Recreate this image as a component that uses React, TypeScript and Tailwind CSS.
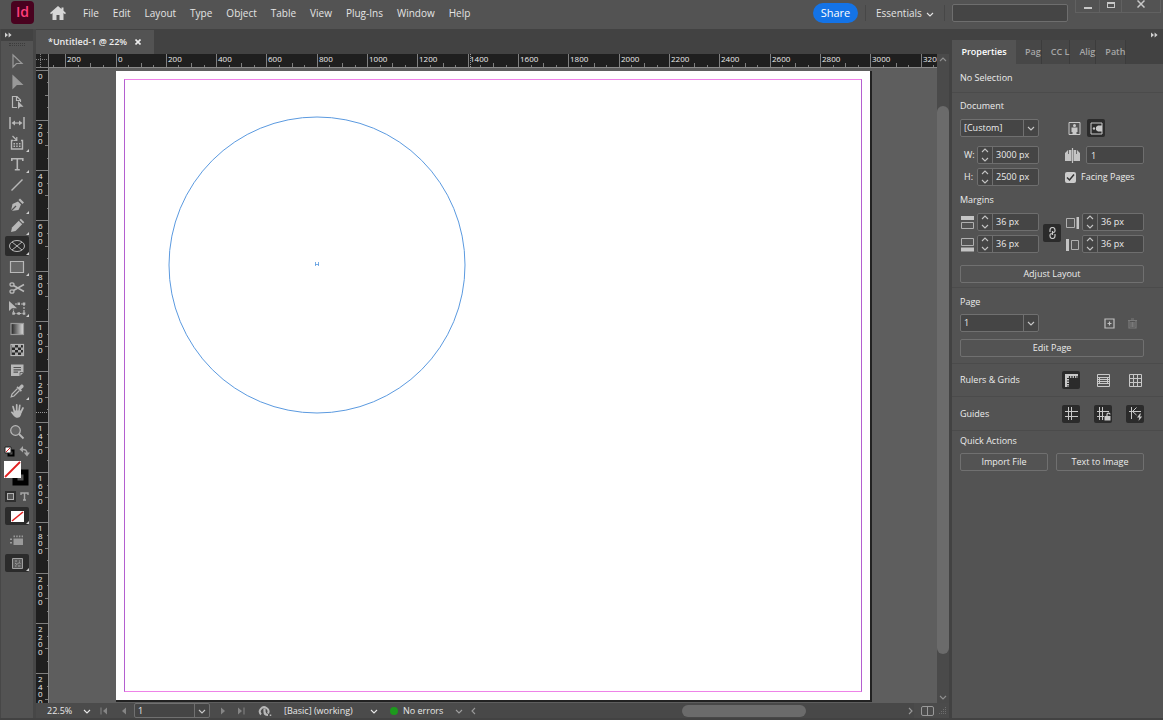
import { useState, type ReactNode } from 'react';
import clsx from 'clsx';

const MENUS = ['File', 'Edit', 'Layout', 'Type', 'Object', 'Table', 'View', 'Plug-Ins', 'Window', 'Help'];

// screen pixels between two labelled ruler ticks (200 document px)
const STEP = 50.33;

/* ---------- icons ---------- */

function Icon({ children, size = 20 }: { children: ReactNode; size?: number }) {
  return (
    <svg width={size} height={size} viewBox={`0 0 ${size} ${size}`} fill="none" stroke="currentColor" strokeWidth="1.2" className="shrink-0" aria-hidden="true">
      {children}
    </svg>
  );
}

function Chevron({ dir = 'down', className }: { dir?: 'down' | 'up' | 'left' | 'right'; className?: string }) {
  const d = {
    down: 'M1 3l3 3 3-3',
    up: 'M1 5l3-3 3 3',
    left: 'M5 1L2 4l3 3',
    right: 'M3 1l3 3-3 3',
  }[dir];
  return (
    <svg width="8" height="8" viewBox="0 0 8 8" fill="none" stroke="currentColor" strokeWidth="1.1" className={clsx('shrink-0', className)} aria-hidden="true">
      <path d={d} />
    </svg>
  );
}

function DoubleArrow() {
  return (
    <svg width="7" height="6" viewBox="0 0 7 6" fill="#d0d0d0" aria-hidden="true">
      <path d="M0 .5L3 3 0 5.5zM3.6.5l3 2.5-3 2.5z" />
    </svg>
  );
}

interface Tool {
  id: string;
  flyout?: boolean;
  icon: ReactNode;
}

const TOOLS: Tool[] = [
  { id: 'Selection', icon: <path d="M6 4v12l3.5-3.5H15z" stroke="#999" /> },
  { id: 'Direct Selection', icon: <path d="M6 4v12l3.5-3.5H15z" fill="#999" stroke="#999" /> },
  {
    id: 'Page',
    icon: (
      <>
        <path d="M10 15.5H5.500v-11H10l3.500 3.500v2M9.500 4.500V8.500h4" />
        <path d="M11 9v8l2.200-2.200H16.500z" fill="currentColor" stroke="none" />
      </>
    ),
  },
  {
    id: 'Gap',
    icon: (
      <>
        <path d="M3 4v12M17 4v12" strokeWidth="1.500" />
        <path d="M6 10h8" />
        <path d="M8 7.500L4.500 10l3.500 2.500zM12 7.500l3.500 2.500-3.500 2.500z" fill="currentColor" stroke="none" />
      </>
    ),
  },
  {
    id: 'Content Collector',
    flyout: true,
    icon: (
      <>
        <path d="M6 7.500H4.500V16h11V7.500H14" strokeWidth="1.400" />
        <path d="M5.500 3l4 4M9.800 4v3.500H6.300" />
        <path d="M6.500 10H8v1.500H6.500zM9.200 10h1.500v1.500H9.200zM12 10h1.500v1.500H12zM6.500 12.500H8V14H6.500zM9.200 12.500h1.500V14H9.200zM12 12.500h1.500V14H12z" fill="currentColor" stroke="none" />
      </>
    ),
  },
  { id: 'Type', flyout: true, icon: <path d="M4.800 7V4.700h11V7M10.300 4.700v11M7.800 15.700h5" strokeWidth="1.600" /> },
  { id: 'Line', icon: <path d="M4.500 15.500l11-11" strokeWidth="1.400" /> },
  {
    id: 'Pen',
    flyout: true,
    icon: (
      <>
        <path d="M4 16l1.500-7 5.500-2.500 3 3-2.500 5.500z" fill="currentColor" stroke="none" />
        <path d="M11.500 5l1.500-1.500 4 4L15.500 9z" fill="currentColor" stroke="none" />
        <path d="M4 16l5-5" stroke="#535353" />
      </>
    ),
  },
  {
    id: 'Pencil',
    flyout: true,
    icon: (
      <>
        <path d="M4 16l1-4.500 6.700-6.700 3.500 3.500L8.500 15z" fill="currentColor" stroke="none" />
        <path d="M12.500 4l1.300-1.300 3.500 3.500L16 7.500z" fill="currentColor" stroke="none" />
      </>
    ),
  },
  {
    id: 'Ellipse Frame',
    flyout: true,
    icon: (
      <>
        <ellipse cx="10" cy="10" rx="7.500" ry="5.500" strokeWidth="1" />
        <path d="M5 6l10 8M15 6L5 14" strokeWidth="1" />
      </>
    ),
  },
  { id: 'Rectangle', flyout: true, icon: <path d="M3.500 4.500h13v11h-13z" fill="#686868" /> },
  {
    id: 'Scissors',
    icon: (
      <>
        <ellipse cx="5" cy="6.500" rx="2" ry="1.700" strokeWidth="1.300" />
        <ellipse cx="5" cy="13.500" rx="2" ry="1.700" strokeWidth="1.300" />
        <path d="M6.500 7.500L17 13.500M6.500 12.500L17 6.500" strokeWidth="1.500" />
      </>
    ),
  },
  {
    id: 'Free Transform',
    flyout: true,
    icon: (
      <>
        <path d="M8 6h9v9.500H6.500V11" strokeDasharray="2 1" />
        <path d="M5.300 14.300h2.500v2.500H5.300zM15.800 14.300h2.500v2.500h-2.500zM15.800 4.500h2.500V7h-2.500zM10.500 14.300H13v2.500h-2.500zM10.500 4.500H13V7h-2.500z" fill="currentColor" stroke="none" />
        <path d="M2 3v10l3-2.700h5z" fill="currentColor" stroke="none" />
      </>
    ),
  },
  {
    id: 'Gradient Swatch',
    icon: (
      <>
        <defs>
          <linearGradient id="swatch">
            <stop offset="0" stopColor="#222" />
            <stop offset="1" stopColor="#ddd" />
          </linearGradient>
        </defs>
        <rect x="4" y="4.500" width="12.500" height="11" fill="url(#swatch)" stroke="#999" />
      </>
    ),
  },
  {
    id: 'Gradient Feather',
    icon: (
      <>
        <rect x="4" y="4.500" width="12.500" height="11" fill="#292929" />
        <path d="M5 5h3v2.500H5zM11 5h3v2.500h-3zM8 7.500h3V10H8zM14 7.500h2.500V10H14zM5 10h3v2.500H5zM11 10h3v2.500h-3zM8 12.500h3V15H8zM14 12.500h2.500V15H14z" fill="#aaa" stroke="none" />
      </>
    ),
  },
  {
    id: 'Note',
    icon: (
      <>
        <path d="M4 4.500h12.500v8l-3.500 3.500H4z" fill="currentColor" stroke="none" />
        <path d="M6.500 7.500H14M6.500 9.800H14M6.500 12.200H11" stroke="#535353" />
        <path d="M13 16v-3.500h3.500" stroke="#535353" strokeWidth=".8" />
      </>
    ),
  },
  {
    id: 'Eyedropper',
    flyout: true,
    icon: (
      <>
        <path d="M10.500 7.500L5 13l-.8 2.800L7 15l5.500-5.500" />
        <path d="M9.500 6.500l1.200-1.200 1 1 2-2.300c1.500-1.500 4 .8 2.500 2.500L14 8.500l1 1-1.200 1.200z" fill="currentColor" stroke="none" />
      </>
    ),
  },
  {
    id: 'Hand',
    icon: (
      <>
        <path d="M7.500 11L6 5.500M9.700 10V3.800M12 10l.8-5.700M14 11l2-4" strokeWidth="1.700" strokeLinecap="round" />
        <path d="M6.800 9.500h7.900c0 4-1.200 7.200-4.200 7.200-2.500 0-3.500-1.500-6.800-5.700.8-1.200 2-.4 3.100.8z" fill="currentColor" stroke="none" />
      </>
    ),
  },
  {
    id: 'Zoom',
    icon: (
      <>
        <circle cx="8.500" cy="8.500" r="4.800" fill="#646464" />
        <path d="M12 12l4.500 4.500" strokeWidth="1.800" />
      </>
    ),
  },
];

/* ---------- small controls ---------- */

function Flyout() {
  return (
    <svg width="3" height="3" viewBox="0 0 3 3" fill="#d0d0d0" className="absolute right-0 bottom-px" aria-hidden="true">
      <path d="M3 0v3H0z" />
    </svg>
  );
}

function SelectBox({ label, value, className }: { label: string; value: string; className?: string }) {
  return (
    <div className={clsx('relative flex rounded-[2px] border border-[#707070] bg-[#454545]', className)}>
      <select aria-label={label} className="w-full appearance-none pl-[3px] text-[#ececec] outline-none">
        <option>{value}</option>
      </select>
      <span className="pointer-events-none absolute inset-y-0 right-0 flex w-[15px] items-center justify-center border-l border-[#707070] text-[#c8c8c8]">
        <Chevron />
      </span>
    </div>
  );
}

function Spinner({ label, initial }: { label: string; initial: number }) {
  const [value, setValue] = useState(`${initial} px`);
  const nudge = (by: number) => setValue(`${(parseInt(value, 10) || 0) + by} px`);

  return (
    <div className="ml-auto flex h-[18px] w-[62px] rounded-[2px] border border-[#6e6e6e] bg-[#454545]">
      <div className="flex w-[15px] shrink-0 flex-col items-center border-r border-[#6e6e6e] text-[#c4c4c4]">
        <button aria-label={`Increase ${label}`} onClick={() => nudge(1)} className="flex h-2 items-center">
          <Chevron dir="up" />
        </button>
        <button aria-label={`Decrease ${label}`} onClick={() => nudge(-1)} className="flex h-2 items-center">
          <Chevron />
        </button>
      </div>
      <input
        aria-label={label}
        value={value}
        onChange={(e) => setValue(e.target.value)}
        className="w-full min-w-0 pl-[3px] text-[#ececec] outline-none"
      />
    </div>
  );
}

function PanelButton({ children }: { children: ReactNode }) {
  return (
    <button className="h-[18px] flex-1 rounded-[2px] border border-[#707070] text-center hover:bg-[#5e5e5e]">
      {children}
    </button>
  );
}

function ToggleIcon({ label, active, children }: { label: string; active?: boolean; children: ReactNode }) {
  return (
    <button
      aria-label={label}
      className={clsx('flex size-[18px] items-center justify-center rounded-[2px] text-[#c8c8c8]', active && 'bg-[#2b2b2b]')}
    >
      {children}
    </button>
  );
}

/* ---------- rulers ---------- */

function HorizontalRuler() {
  const origin = 67;
  const ticks = Array.from({ length: 76 }, (_, i) => i - 5);
  return (
    <svg width="100%" height="14" className="block bg-[#1f1f1f]" aria-hidden="true">
      {ticks.map((t) => {
        const x = Math.floor(origin + (t * STEP) / 4) + 0.5;
        const top = t % 4 === 0 ? 0 : t % 2 === 0 ? 9 : 11;
        return <path key={t} d={`M${x} ${top}V14`} stroke="#808080" />;
      })}
      {ticks
        .filter((t) => t % 4 === 0)
        .map((t) => (
          <text key={t} x={Math.floor(origin + (t * STEP) / 4) + 2} y="8" className="fill-[#ececec] text-[8px] font-medium">
            {Math.abs(t) * 50}
          </text>
        ))}
      <path d="M421.500 0V14" stroke="#999" strokeDasharray="1 1" />
      <path d="M0 13.500H2000" stroke="#8a8a8a" />
    </svg>
  );
}

function VerticalRuler() {
  const origin = 2;
  const ticks = Array.from({ length: 52 }, (_, i) => i);
  return (
    <svg width="13" height="100%" className="block bg-[#1f1f1f]" aria-hidden="true">
      {ticks.map((t) => {
        const y = Math.floor(origin + (t * STEP) / 4) + 0.5;
        const left = t % 4 === 0 ? 0 : t % 2 === 0 ? 9 : 11;
        return <path key={t} d={`M${left} ${y}H13`} stroke="#808080" />;
      })}
      {ticks
        .filter((t) => t % 4 === 0)
        .map((t) =>
          String(t * 50)
            .split('')
            .map((digit, n) => (
              <text key={`${t}-${n}`} x="2" y={Math.floor(origin + (t * STEP) / 4) + 9 + Math.round(n * 7.5)} className="fill-[#ececec] text-[8px] font-medium">
                {digit}
              </text>
            ))
        )}
      <path d="M0 344.500H13" stroke="#999" strokeDasharray="1 1" />
      <path d="M12.500 0V2000" stroke="#8a8a8a" />
    </svg>
  );
}

/* ---------- main regions ---------- */

function MenuBar() {
  return (
    <header className="flex h-[29px] shrink-0 items-start bg-[#535353] text-[10px] leading-4 text-[#e4e4e4]">
      <div className="ml-[11px] mt-px flex size-[23px] items-center justify-center rounded-[4px] bg-[#49021f] pb-[2px] text-[14px] font-semibold text-[#ff3f7c]">
        Id
      </div>
      <button aria-label="Home" className="ml-4 mt-[6px]">
        <svg width="16" height="14" viewBox="0 0 16 14" fill="#d6d6d6" aria-hidden="true">
          <path d="M8 0L0 7l1 1.200 1.500-1.200V14h4V9h3v5h4V7L15 8.200 16 7l-2.500-2.200V1.500h-2V3z" />
        </svg>
      </button>
      <nav className="ml-[10px] mt-[5px] flex font-medium">
        {MENUS.map((name) => (
          <button key={name} className="px-[7px] hover:bg-[#666]">
            {name}
          </button>
        ))}
      </nav>
      <button className="ml-auto mt-[3px] h-5 w-[45px] rounded-full bg-[#1473e6] text-[11px] text-white">Share</button>
      <span className="ml-[7px] mt-[5px] h-4 w-px bg-[#474747]" />
      <button className="ml-[10px] mt-[5px] flex w-[58px] items-center justify-between">
        Essentials
        <Chevron className="mt-px" />
      </button>
      <span className="ml-[10px] mt-[5px] h-4 w-px bg-[#474747]" />
      <input aria-label="Search" className="ml-[7px] mt-1 h-[18px] w-[116px] rounded-[2px] border border-[#6e6e6e] bg-[#454545] px-1 outline-none" />
      <div className="ml-[7px] mr-[2px] flex h-[13px] border border-t-0 border-[#616161] text-[#c8c8c8]">
        <button aria-label="Minimize" className="flex w-6 items-center justify-center border-r border-[#616161]">
          <span className="mt-1 h-[2px] w-2 bg-current" />
        </button>
        <button aria-label="Maximize" className="flex w-[22px] items-start justify-center border-r border-[#616161] pt-[2px]">
          <span className="h-[6px] w-2 border border-t-2 border-current" />
        </button>
        <button aria-label="Close" className="flex w-[38px] justify-center">
          <svg width="8" height="8" viewBox="0 0 8 8" stroke="currentColor" strokeWidth="1.500" aria-hidden="true">
            <path d="M.5.5l7 7M7.500.5l-7 7" />
          </svg>
        </button>
      </div>
    </header>
  );
}

function ToolBar() {
  const [active, setActive] = useState('Ellipse Frame');

  return (
    <aside className="flex w-[36px] shrink-0 flex-col border-l border-r-3 border-[#474747] bg-[#535353] text-[#b8b8b8]">
      <div className="flex h-[12px] items-center bg-[#424242] pl-[4px]">
        <DoubleArrow />
      </div>
      <div className="mx-auto mt-[2px] h-[3px] w-4 border-y border-dotted border-[#3c3c3c]" />

      <div className="mx-auto mt-[5px] flex h-[391px] shrink-0 flex-col justify-between">
        {TOOLS.map((tool) => (
          <button
            key={tool.id}
            aria-label={tool.id}
            onClick={() => setActive(tool.id)}
            className={clsx('relative flex h-5 w-6 items-center justify-center rounded-[2px]', active === tool.id && 'bg-[#2b2b2b]')}
          >
            <Icon>{tool.icon}</Icon>
            {tool.flyout && <Flyout />}
          </button>
        ))}
      </div>

      {/* default colours, swap */}
      <div className="mt-1 flex justify-between px-[3px]">
        <button aria-label="Default Fill and Stroke">
          <svg width="11" height="11" viewBox="0 0 11 11" aria-hidden="true">
            <path d="M4.500 4.500h5v5h-5z" fill="none" stroke="#000" strokeWidth="2" />
            <path d="M1 1h6v6H1z" fill="#fff" stroke="#222" />
            <path d="M2 6l4-4" stroke="#e02020" />
          </svg>
        </button>
        <button aria-label="Swap Fill and Stroke">
          <svg width="11" height="11" viewBox="0 0 11 11" fill="none" stroke="#a8a8a8" strokeWidth="1.500" aria-hidden="true">
            <path d="M3 3.500c3-.5 5 1 5 4" />
            <path d="M4 0v6.500L.5 3.500zM4.800 6.500H11L8 10.500z" fill="#a8a8a8" stroke="none" />
          </svg>
        </button>
      </div>
      <button aria-label="Fill and Stroke" className="mx-auto mt-1">
        <svg width="26" height="26" viewBox="0 0 26 26" aria-hidden="true">
          <path d="M11 11h11v11H11z" fill="#535353" stroke="#000" strokeWidth="5" />
          <path d="M0 0h17v17H0z" fill="#fff" />
          <path d="M1 16L16 1" stroke="#e02020" strokeWidth="1.800" />
        </svg>
      </button>
      <div className="mt-1 flex items-center justify-between px-1">
        <button aria-label="Formatting affects container" className="flex size-[11px] items-center justify-center bg-[#2f2f2f]">
          <span className="size-[7px] border border-[#b0b0b0] bg-[#555]" />
        </button>
        <button aria-label="Formatting affects text">
          <svg width="9" height="9" viewBox="0 0 9 9" fill="none" stroke="#a8a8a8" strokeWidth="1.400" aria-hidden="true">
            <path d="M1 3V1h7v2M4.500 1v7M3 8h3" />
          </svg>
        </button>
      </div>
      <button aria-label="Apply None" className="relative mx-auto mt-[5px] flex h-[18px] w-6 items-center justify-center rounded-[2px] bg-[#2b2b2b]">
        <svg width="13" height="11" viewBox="0 0 13 11" aria-hidden="true">
          <path d="M0 0h13v11H0z" fill="#fff" />
          <path d="M1 10L12 1" stroke="#e02020" strokeWidth="1.600" />
        </svg>
        <Flyout />
      </button>
      <button aria-label="View Options" className="mx-auto mt-[9px]">
        <svg width="14" height="12" viewBox="0 0 14 12" fill="#9a9a9a" aria-hidden="true">
          <path d="M3.500 4.500H13V11H3.500zM3.500 1.500H5v1.800H3.500zM6.200 1.500h1.500v1.800H6.200zM8.900 1.500h1.500v1.800H8.900zM11.600 1.500H13v1.800h-1.400zM0 4.500h2V6H0zM0 8h2v1.500H0z" />
        </svg>
      </button>
      <button aria-label="Screen Mode" className="relative mx-auto mt-2 flex h-[18px] w-6 items-center justify-center rounded-[2px] bg-[#2b2b2b]">
        <svg width="11" height="11" viewBox="0 0 11 11" fill="none" stroke="#a0a0a0" aria-hidden="true">
          <path d="M.5.5h10v10H.5z" fill="#5a5a5a" />
          <path d="M3 3h2M7 3h1M3 5l2 1.500 2-2 1.500 1M3 8h1.500M6 8h2.500" />
        </svg>
        <Flyout />
      </button>
    </aside>
  );
}

function Canvas() {
  return (
    <div className="min-w-0 flex-1 overflow-hidden bg-[#5e5e5e] pt-[3px] pl-[67px]">
      <div className="relative h-[629px] w-[754px] bg-white p-2 shadow-[1px_1px_0_1px_#222]">
        <div className="h-[613px] w-[738px] border border-x-[#b45fd0] border-y-[#ee82e8]" />
        {/* ellipse frame being drawn */}
        <svg className="absolute left-[52px] top-[45px]" width="298" height="298" viewBox="0 0 298 298" fill="none" stroke="#5b9ae0" aria-hidden="true">
          <circle cx="149" cy="149" r="148" />
          <path d="M147.500 146v4M150.500 146v4M147 148.500h4" strokeWidth=".8" />
        </svg>
      </div>
    </div>
  );
}

function StatusBar() {
  return (
    <footer className="flex h-[15px] shrink-0 items-center bg-[#4b4b4b] text-[9px] leading-[14px] font-medium text-[#e8e8e8]">
      <button aria-label="Zoom level" className="ml-[11px] flex w-[44px] items-center justify-between">
        22.5%
        <Chevron />
      </button>
      <div className="ml-[9px] flex w-[26px] items-center justify-between text-[#858585]">
        <button aria-label="First page">
          <svg width="8" height="8" viewBox="0 0 8 8" fill="currentColor" aria-hidden="true">
            <path d="M.5.5h1v7h-1zM7 .5v7L3 4z" />
          </svg>
        </button>
        <button aria-label="Previous page">
          <svg width="4" height="8" viewBox="0 0 4 8" fill="currentColor" aria-hidden="true">
            <path d="M4 .5v7L0 4z" />
          </svg>
        </button>
      </div>
      <SelectBox label="Go to page" value="1" className="ml-2 h-[15px] w-[76px]" />
      <div className="ml-[11px] flex w-6 items-center justify-between text-[#858585]">
        <button aria-label="Next page">
          <svg width="4" height="8" viewBox="0 0 4 8" fill="currentColor" aria-hidden="true">
            <path d="M0 .5v7L4 4z" />
          </svg>
        </button>
        <button aria-label="Last page">
          <svg width="8" height="8" viewBox="0 0 8 8" fill="currentColor" aria-hidden="true">
            <path d="M1 .5v7L5 4zM6.500.5h1v7h-1z" />
          </svg>
        </button>
      </div>
      <button aria-label="Open in Bridge" className="ml-[13px]">
        <svg width="14" height="12" viewBox="0 0 14 12" fill="none" stroke="#b8b8b8" aria-hidden="true">
          <path d="M3 9.500A4.300 4.300 0 1 1 10 8.500" strokeWidth="2" />
          <path d="M6.500 3.500v3c0 2.500 1.500 3.500 3.500 3.500" strokeWidth="2.200" />
          <path d="M12.500 9.500v1.500" strokeWidth="1.500" />
        </svg>
      </button>
      <button className="ml-[12px] flex w-[94px] items-center justify-between">
        [Basic] (working)
        <Chevron />
      </button>
      <button className="ml-[12px] flex w-[73px] items-center">
        <span className="mr-[5px] size-2 rounded-full bg-[#1d9a1d]" />
        No errors
        <Chevron className="ml-auto text-[#a0a0a0]" />
      </button>
      <div className="ml-[7px] flex h-full min-w-0 flex-1 items-center bg-[#484848] text-[#999]">
        <Chevron dir="left" />
        <div className="ml-auto mr-[100px] h-[12px] w-[124px] rounded-full bg-[#6b6b6b]" />
        <Chevron dir="right" />
      </div>
      <button aria-label="Split view" className="ml-[7px] flex h-[10px] w-[13px] rounded-[2px] border border-[#999]">
        <span className="h-full w-[6px] border-r border-[#999]" />
      </button>
      <svg width="9" height="9" viewBox="0 0 9 9" fill="#6e6e6e" className="ml-1 mr-[2px]" aria-hidden="true">
        <path d="M7 1h1v1H7zM7 3h1v1H7zM7 5h1v1H7zM7 7h1v1H7zM5 3h1v1H5zM5 5h1v1H5zM5 7h1v1H5zM3 5h1v1H3zM3 7h1v1H3zM1 7h1v1H1z" />
      </svg>
    </footer>
  );
}

function DocumentWindow() {
  return (
    <main className="flex min-w-0 flex-1 flex-col">
      <div className="flex h-[25px] shrink-0 bg-[#424242] pt-px">
        <div className="flex w-[118px] items-center bg-[#535353] pl-[12px] text-[9px] font-semibold text-[#ececec]">
          *Untitled-1 @ 22%
          <button aria-label="Close document" className="ml-2">
            <svg width="6" height="6" viewBox="0 0 6 6" stroke="currentColor" strokeWidth="1.600" aria-hidden="true">
              <path d="M.5.5l5 5M5.500.5l-5 5" />
            </svg>
          </button>
        </div>
      </div>

      <div className="flex min-h-0 flex-1">
        <div className="flex min-w-0 flex-1 flex-col">
          <div className="flex h-[14px] shrink-0">
            <svg width="13" height="14" className="shrink-0 bg-[#1f1f1f]" stroke="#808080" aria-hidden="true">
              <path d="M4.500 0v14M0 5.500h13" strokeDasharray="1 1" />
              <path d="M12.500 0v14M0 13.500h13" />
            </svg>
            <div className="min-w-0 flex-1 overflow-hidden">
              <HorizontalRuler />
            </div>
          </div>
          <div className="flex min-h-0 flex-1 overflow-hidden">
            <div className="shrink-0 overflow-hidden">
              <VerticalRuler />
            </div>
            <Canvas />
          </div>
        </div>

        {/* vertical scroll bar */}
        <div className="flex w-3 shrink-0 flex-col items-center bg-[#4a4a4a] py-[2px] text-[#909090]">
          <Chevron dir="up" />
          <div className="mt-[42px] mb-[39px] min-h-0 w-3 flex-1 rounded-full bg-[#6b6b6b]" />
          <Chevron />
        </div>
      </div>

      <StatusBar />
    </main>
  );
}

const PANEL_TABS = [
  { name: 'Pages', text: 'Pag' },
  { name: 'CC Libraries', text: 'CC L' },
  { name: 'Align', text: 'Alig' },
  { name: 'Pathfinder', text: 'Path' },
];

const RULER_ICONS = [
  {
    label: 'Show Rulers',
    active: true,
    icon: (
      <>
        <path d="M1 1h13v4H5v9H1z" fill="currentColor" stroke="none" />
        <path d="M5.500 3v2M8 3v2M10.500 3v2M13 3v2M3 5.500h2M3 8h2M3 10.500h2M3 13h2" stroke="#2b2b2b" />
      </>
    ),
  },
  {
    label: 'Show Baseline Grid',
    icon: <path d="M1.500 1.500h12v12h-12zM1.500 4.500h12M1.500 6.500h12M1.500 8.500h12M1.500 10.500h12M3.500 4.500v6M11.500 4.500v6" strokeWidth="1" />,
  },
  {
    label: 'Show Document Grid',
    icon: <path d="M1.500 1.500h12v12h-12zM1.500 5.500h12M1.500 9.500h12M5.500 1.500v12M9.500 1.500v12" strokeWidth="1" />,
  },
];

const GUIDE_ICONS = [
  { label: 'Show Guides', icon: <path d="M4.500 1v13M7.500 1v13M1 5.500h13M1 10.500h13" strokeWidth="1" /> },
  {
    label: 'Lock Guides',
    icon: (
      <>
        <path d="M3.500 1v13M6.500 1v13M1 5.500h12M1 10.500h7" strokeWidth="1" />
        <path d="M8.500 10h6v4.500h-6z" fill="currentColor" stroke="none" />
        <path d="M11 10V8.500c0-1.800 3-1.800 3 0" />
      </>
    ),
  },
  {
    label: 'Smart Guides',
    icon: (
      <>
        <path d="M3.500 1v12M1 5.500h12M8.500 1.500L4.500 5.500l4 3.500" strokeWidth="1" />
        <path d="M12 7.500L9 11.500h2.300L10.500 15l3.700-4.500h-2.300L13 7.500z" fill="currentColor" stroke="none" />
      </>
    ),
  },
];

function MarginIcon({ side }: { side: 'top' | 'bottom' | 'inside' | 'outside' }) {
  const shape = {
    top: ['M1 1h13v4H1z', 'M1.500 7.500h12v6h-12z'],
    bottom: ['M1 10.500h13v4H1z', 'M1.500 1.500h12v7h-12z'],
    inside: ['M11.500 2H14v12h-2.500z', 'M1.500 3.500h8v9h-8z'],
    outside: ['M1 2h3v12H1z', 'M6.500 3.500h7v9h-7z'],
  }[side];
  return (
    <Icon size={15}>
      <path d={shape[0]} fill="#c4c4c4" stroke="none" />
      <path d={shape[1]} stroke="#b0b0b0" strokeWidth="1" />
    </Icon>
  );
}

function PropertiesPanel() {
  const [facing, setFacing] = useState(true);

  return (
    <aside className="w-[214px] shrink-0 border-l-3 border-[#424242] bg-[#535353] text-[9px] leading-3 font-medium text-[#ececec]">
      <div className="flex h-[11px] items-center justify-end bg-[#424242] pr-[5px]">
        <DoubleArrow />
      </div>
      <div className="flex h-6 bg-[#424242] font-semibold text-[#a6a6a6]">
        <button className="w-[64px] bg-[#535353] text-white">Properties</button>
        {PANEL_TABS.map((tab) => (
          <button key={tab.name} aria-label={tab.name} className="shrink-0 whitespace-nowrap border-r border-[#3c3c3c] bg-[#474747] pl-[9px]">
            {tab.text}
          </button>
        ))}
      </div>

      <p className="border-b border-[#4b4b4b] px-2 py-2">No Selection</p>

      <section className="border-b border-[#4b4b4b] pt-[7px] pb-1 pl-2">
        <h3>Document</h3>
        <div className="mt-[7px] grid grid-cols-[79px_26px_79px] items-center gap-y-1">
          <SelectBox label="Document preset" value="[Custom]" className="mb-[5px] h-[18px]" />
          <span />
          <div className="mb-[5px] flex gap-1">
            <ToggleIcon label="Portrait">
              <Icon size={15}>
                <path d="M2 1.500h11v12H2z" strokeWidth="1" />
                <circle cx="7.500" cy="4.500" r="1.500" fill="currentColor" stroke="none" />
                <path d="M4.500 6.500h6V11H9.500v2.500h-4V11h-1z" fill="currentColor" stroke="none" />
              </Icon>
            </ToggleIcon>
            <ToggleIcon label="Landscape" active>
              <Icon size={15}>
                <path d="M2 2h11v11H2z" strokeWidth="1" />
                <circle cx="5" cy="7.500" r="1.200" fill="currentColor" stroke="none" />
                <path d="M7 6l2-1.500h4v6H9L7 9z" fill="currentColor" stroke="none" />
              </Icon>
            </ToggleIcon>
          </div>

          <div className="flex items-center pl-1">
            W: <Spinner label="Width" initial={3000} />
          </div>
          <span />
          <div className="flex items-center text-[#c4c4c4]">
            <Icon size={15}>
              <path d="M0 5l3-3h3.500v11H0zM8.500 2H12l3 3v8H8.500z" fill="currentColor" stroke="none" />
              <path d="M7.500 0v15" />
              <path d="M3.500 2v4M11.500 2v4" stroke="#535353" strokeWidth=".8" />
            </Icon>
            <input
              aria-label="Number of pages"
              defaultValue="1"
              className="ml-auto h-[18px] w-[58px] rounded-[2px] border border-[#6e6e6e] bg-[#454545] pl-1 text-[#ececec] outline-none"
            />
          </div>

          <div className="flex items-center pl-1">
            H: <Spinner label="Height" initial={2500} />
          </div>
          <span />
          <label className="flex items-center gap-[5px] whitespace-nowrap">
            <input type="checkbox" checked={facing} onChange={(e) => setFacing(e.target.checked)} className="peer sr-only" />
            <svg width="11" height="11" viewBox="0 0 11 11" fill="none" className="shrink-0 rounded-[2px] bg-[#cccccc]" aria-hidden="true">
              {facing && <path d="M2 5.500L4.500 8 9 2.500" stroke="#333" strokeWidth="1.500" />}
            </svg>
            Facing Pages
          </label>
        </div>

        <h3 className="mt-2">Margins</h3>
        <div className="mt-[7px] grid grid-cols-[79px_26px_79px] items-center gap-y-1">
          <div className="flex items-center">
            <MarginIcon side="top" />
            <Spinner label="Top margin" initial={36} />
          </div>
          <div className="row-span-2 flex justify-center">
            <ToggleIcon label="Make all settings the same" active>
              <svg width="7" height="12" viewBox="0 0 7 12" fill="none" stroke="currentColor" strokeWidth="1.200" aria-hidden="true">
                <path d="M1 5V3a2.500 2.500 0 0 1 5 0v1c0 1-1 1.500-2 1.500M6 7v2a2.500 2.500 0 0 1-5 0V8c0-1 1-1.500 2-1.500M3.500 4v4" />
              </svg>
            </ToggleIcon>
          </div>
          <div className="flex items-center">
            <MarginIcon side="inside" />
            <Spinner label="Inside margin" initial={36} />
          </div>
          <div className="flex items-center">
            <MarginIcon side="bottom" />
            <Spinner label="Bottom margin" initial={36} />
          </div>
          <div className="flex items-center">
            <MarginIcon side="outside" />
            <Spinner label="Outside margin" initial={36} />
          </div>
        </div>

        <div className="mt-3 mr-[19px] flex">
          <PanelButton>Adjust Layout</PanelButton>
        </div>
      </section>

      <section className="border-b border-[#4b4b4b] pt-2 pr-[19px] pb-[6px] pl-2">
        <h3>Page</h3>
        <div className="mt-[6px] flex items-center">
          <SelectBox label="Page" value="1" className="h-[18px] w-[79px]" />
          <button aria-label="New page" className="ml-auto text-[#c0c0c0]">
            <Icon size={11}>
              <path d="M1 1h9v9H1zM5.500 3.500v4M3.500 5.500h4" />
            </Icon>
          </button>
          <button aria-label="Delete page" className="ml-3 mr-[6px] text-[#7a7a7a]">
            <Icon size={11}>
              <path d="M2 3v7h7V3M1 2.500h9M4 1h3M4 4v5M5.500 4v5M7 4v5" />
            </Icon>
          </button>
        </div>
        <div className="mt-[7px] flex">
          <PanelButton>Edit Page</PanelButton>
        </div>
      </section>

      <section className="flex h-[33px] items-center border-b border-[#4b4b4b] pr-[19px] pl-2">
        <h3 className="mr-auto">Rulers &amp; Grids</h3>
        <div className="flex gap-[14px]">
          {RULER_ICONS.map((item) => (
            <ToggleIcon key={item.label} label={item.label} active={item.active}>
              <Icon size={15}>{item.icon}</Icon>
            </ToggleIcon>
          ))}
        </div>
      </section>

      <section className="flex h-[34px] items-center border-b border-[#4b4b4b] pr-[19px] pl-2">
        <h3 className="mr-auto">Guides</h3>
        <div className="flex gap-[14px]">
          {GUIDE_ICONS.map((item) => (
            <ToggleIcon key={item.label} label={item.label} active>
              <Icon size={15}>{item.icon}</Icon>
            </ToggleIcon>
          ))}
        </div>
      </section>

      <section className="pt-1 pr-[19px] pl-2">
        <h3>Quick Actions</h3>
        <div className="mt-[6px] flex gap-2">
          <PanelButton>Import File</PanelButton>
          <PanelButton>Text to Image</PanelButton>
        </div>
      </section>
    </aside>
  );
}

export default function App() {
  return (
    <div className="flex h-screen w-full flex-col overflow-hidden bg-[#535353] font-['Open_Sans','Noto_Sans',sans-serif]">
      <MenuBar />
      <div className="flex min-h-0 flex-1 border-b-2 border-[#424242]">
        <ToolBar />
        <DocumentWindow />
        <PropertiesPanel />
      </div>
    </div>
  );
}
